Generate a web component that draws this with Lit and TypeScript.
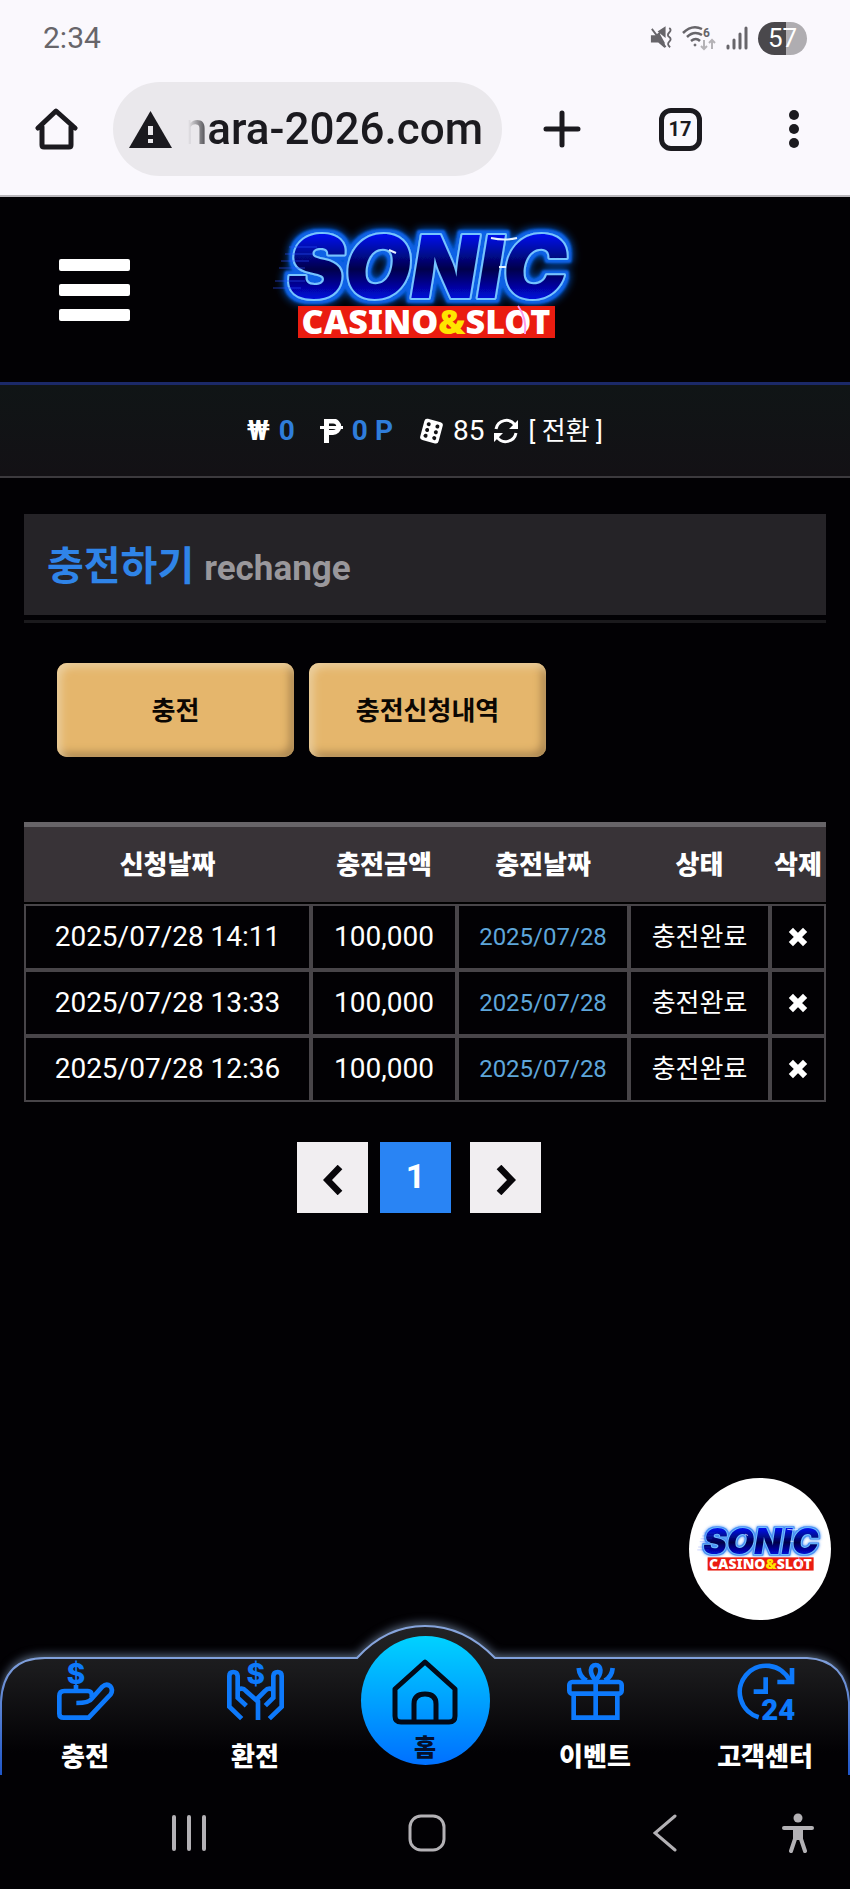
import { LitElement, html, css, svg } from "lit";
import { customElement, property } from "lit/decorators.js";

interface Deposit {
  requested: string;
  amount: string;
  credited: string;
  status: string;
}

const DEPOSITS: Deposit[] = [
  { requested: "2025/07/28 14:11", amount: "100,000", credited: "2025/07/28", status: "충전완료" },
  { requested: "2025/07/28 13:33", amount: "100,000", credited: "2025/07/28", status: "충전완료" },
  { requested: "2025/07/28 12:36", amount: "100,000", credited: "2025/07/28", status: "충전완료" },
];

const base = css`
  *,
  *::before,
  *::after {
    box-sizing: border-box;
  }
  :host {
    font-family: Roboto, "Noto Sans CJK KR", sans-serif;
  }
  button {
    display: flex;
    align-items: center;
    justify-content: center;
    margin: 0;
    padding: 0;
    border: 0;
    background: none;
    color: inherit;
    font: inherit;
    cursor: pointer;
  }
  a {
    color: inherit;
    text-decoration: none;
  }
  svg {
    display: block;
    flex: none;
  }
`;

@customElement("brand-logo")
class BrandLogo extends LitElement {
  @property({ type: Boolean, reflect: true }) light = false;

  static styles = [
    base,
    css`
      :host {
        display: block;
      }
      svg {
        width: 100%;
        height: auto;
        overflow: visible;
      }
      .word {
        font: italic 900 86px Inter, sans-serif;
        paint-order: stroke;
        stroke: #74c4ff;
        stroke-width: 4;
        stroke-linejoin: round;
      }
      .tag {
        font: 900 34px "Noto Sans", sans-serif;
        fill: #fff;
      }
      .amp {
        fill: #ffe600;
      }
      .aura {
        flood-color: #0c62e6;
      }
      :host([light]) .aura {
        flood-color: #4a90f4;
      }
    `,
  ];

  render() {
    return html`
      <svg viewBox="0 8 320 120" role="img" aria-label="SONIC CASINO&SLOT">
        <defs>
          <linearGradient id="fill" x1="0" y1="0" x2="0" y2="1">
            <stop offset="0.2" stop-color="#0010e8" />
            <stop offset="0.52" stop-color="#00024a" />
            <stop offset="0.8" stop-color="#0008d8" />
          </linearGradient>
          <filter id="glow" x="-10%" y="-20%" width="120%" height="140%">
            <feMorphology in="SourceAlpha" operator="dilate" radius="3" />
            <feGaussianBlur stdDeviation="1" result="wide" />
            <feFlood class="aura" />
            <feComposite in2="wide" operator="in" result="ring" />
            <feGaussianBlur in="ring" stdDeviation="4" result="soft" />
            <feMerge>
              <feMergeNode in="soft" />
              <feMergeNode in="ring" />
              <feMergeNode in="SourceGraphic" />
            </feMerge>
          </filter>
        </defs>
        <text class="word" x="162" y="76" text-anchor="middle" fill="url(#fill)" filter="url(#glow)">SONIC</text>
        <path d="M24 25H52M20 32H48M16 39H44M14 46H40M10 59H40M8 66H36" stroke="#2b50ff" stroke-width="1" opacity=".6" />
        <path d="M124 28l7 3M234 45h7M226 16q14 3 26 0" stroke="#e6f2ff" stroke-width="2" fill="none" />
        <rect x="33" y="84" width="257" height="32" fill="#ea1c10" />
        <text class="tag" x="161" y="112" text-anchor="middle">CASINO<tspan class="amp">&amp;</tspan>SLOT</text>
        <path d="M253 84q9 12 7 28" stroke="#ff9bea" stroke-width="2" fill="none" />
      </svg>
    `;
  }
}

@customElement("phone-chrome")
class PhoneChrome extends LitElement {
  static styles = [
    base,
    css`
      :host {
        display: block;
        background: #faf8fd;
        color: #1b1a1f;
        border-bottom: 2px solid #b9b7bc;
      }
      .status {
        display: flex;
        align-items: center;
        height: 76px;
        padding: 0 43px;
        color: #67656a;
      }
      .time {
        flex: 1;
        font-size: 30px;
        line-height: 36px;
      }
      .signals {
        display: flex;
        align-items: center;
        gap: 10px;
      }
      .six {
        font: 700 12px Roboto, sans-serif;
      }
      .battery {
        width: 49px;
        height: 33px;
        border-radius: 17px;
        background: linear-gradient(90deg, #4a484c 57%, #afadb1 57%);
        color: #fff;
        font-size: 26px;
        line-height: 33px;
        text-align: center;
      }
      .bar {
        display: grid;
        grid-template-columns: 113px minmax(0, 1fr) 120px 116px 112px;
        align-items: center;
        height: 119px;
        padding-bottom: 13px;
      }
      .bar button {
        height: 94px;
      }
      .pill {
        display: flex;
        align-items: center;
        gap: 8px;
        height: 94px;
        padding: 0 19px 0 16px;
        border-radius: 47px;
        background: #eae8ec;
      }
      .url {
        flex: 1;
        min-width: 0;
        height: 60px;
        padding: 0;
        border: 0;
        outline: 0;
        background: none;
        color: inherit;
        font: 500 44px Roboto, sans-serif;
        text-align: right;
        mask-image: linear-gradient(90deg, transparent 8px, #000 32px);
      }
      .tabs {
        width: 43px;
        height: 43px;
        border: 5px solid #1b1a1f;
        border-radius: 12px;
        font-size: 20px;
        font-weight: 700;
        line-height: 33px;
        text-align: center;
      }
    `,
  ];

  render() {
    return html`
      <div class="status">
        <span class="time">2:34</span>
        <div class="signals">
          <svg width="22" height="24" viewBox="0 0 24 24" fill="currentColor">
            <path d="M1 9h5l5-4v3l5 9v6l-7-6H1z" />
            <path d="M10 5l6-4v9zM2 2l15 20" stroke="currentColor" stroke-width="2" />
            <path d="M21 1q3 2 0 5t0 5 0 5 1 6" fill="none" stroke="currentColor" stroke-width="2" />
          </svg>
          <svg width="34" height="26" viewBox="0 0 34 26" fill="none" stroke="currentColor" stroke-width="2.5">
            <path d="M1 8Q10-1 20 4M5 12q7-7 15-2M9 16q5-4 9 0" />
            <circle cx="13" cy="20" r="1" fill="currentColor" stroke-width="1" />
            <text class="six" x="21" y="12" fill="currentColor" stroke="none">6</text>
            <path d="M22 15v9m-3-3l3 3 3-3M30 24v-9m-3 3l3-3 3 3" stroke="#b5b3b7" stroke-width="2" />
          </svg>
          <svg width="22" height="24" viewBox="0 0 22 24" stroke="currentColor" stroke-width="3" stroke-linecap="round">
            <path d="M2 20v2M8 14v8M14 8v14M20 2v20" />
          </svg>
          <span class="battery">57</span>
        </div>
      </div>
      <div class="bar">
        <button aria-label="Home">
          <svg width="43" height="44" viewBox="0 0 43 44" fill="none" stroke="currentColor" stroke-width="5" stroke-linecap="round" stroke-linejoin="round">
            <path d="M3 21L21 4l19 17M7 20v18q0 2 2 2h25q2 0 2-2V20" />
          </svg>
        </button>
        <div class="pill">
          <svg width="43" height="37" viewBox="0 0 43 37">
            <path d="M21.500 0L43 37H0z" fill="#1b1a1f" />
            <path d="M19 15h5v9h-5zM19 28h5v4h-5z" fill="#eae8ec" />
          </svg>
          <input class="url" type="text" aria-label="Address" value="nara-2026.com" />
        </div>
        <button aria-label="New tab">
          <svg width="38" height="38" viewBox="0 0 38 38" stroke="currentColor" stroke-width="5" stroke-linecap="round">
            <path d="M19 3v32M3 19h32" />
          </svg>
        </button>
        <button aria-label="Tabs"><span class="tabs">17</span></button>
        <button aria-label="More">
          <svg width="10" height="38" viewBox="0 0 10 38" fill="currentColor">
            <circle cx="5" cy="5" r="5" /><circle cx="5" cy="19" r="5" /><circle cx="5" cy="33" r="5" />
          </svg>
        </button>
      </div>
    `;
  }
}

@customElement("site-header")
class SiteHeader extends LitElement {
  static styles = [
    base,
    css`
      :host {
        display: block;
        color: #fff;
      }
      .top {
        display: grid;
        grid-template-columns: 1fr 320px 1fr;
        align-items: center;
        height: 188px;
        padding: 0 59px;
        border-bottom: 3px solid #1b2968;
      }
      .menu {
        flex-direction: column;
        gap: 13px;
        width: 71px;
      }
      .menu i {
        width: 71px;
        height: 12px;
        border-radius: 2px;
        background: #fff;
      }
      .funds {
        display: flex;
        align-items: center;
        justify-content: center;
        height: 93px;
        border-bottom: 2px solid #3c3a3e;
        background: linear-gradient(#101516, #131115);
        font-size: 28px;
        line-height: 36px;
      }
      .group {
        display: flex;
        align-items: center;
        gap: 9px;
        margin-right: 25px;
      }
      .group:last-child {
        margin-right: 0;
      }
      .sum {
        color: #2f7ddb;
      }
      .swap {
        font-size: 26px;
      }
    `,
  ];

  render() {
    return html`
      <div class="top">
        <button class="menu" aria-label="메뉴"><i></i><i></i><i></i></button>
        <brand-logo></brand-logo>
      </div>
      <div class="funds">
        <div class="group"><b>₩</b><b class="sum">0</b></div>
        <div class="group">
          <svg width="23" height="24" viewBox="0 0 23 24" fill="none" stroke="#fff">
            <path d="M6.500 24V2H13a5.500 5.500 0 0 1 0 11.500H6" stroke-width="5" />
            <path d="M0 8.500h23" stroke-width="3" />
          </svg>
          <b class="sum">0 P</b>
        </div>
        <div class="group">
          <svg width="26" height="26" viewBox="0 0 26 26">
            <g transform="rotate(15 13 13)">
              <rect x="4" y="2" width="19" height="22" rx="3" fill="#fff" />
              <g fill="#121214">
                <circle cx="9" cy="7" r="2" /><circle cx="18" cy="7" r="2" />
                <circle cx="9" cy="13" r="2" /><circle cx="18" cy="13" r="2" />
                <circle cx="9" cy="19" r="2" /><circle cx="18" cy="19" r="2" />
              </g>
            </g>
          </svg>
          <span>85</span>
          <svg width="26" height="26" viewBox="0 0 26 26" fill="none" stroke="#fff" stroke-width="3">
            <path d="M3 11A10.500 10.500 0 0 1 22 7M23 15A10.500 10.500 0 0 1 4 19" />
            <path d="M25 2v9h-9zM1 24v-9h9z" fill="#fff" stroke="none" />
          </svg>
          <button class="swap">[ 전환 ]</button>
        </div>
      </div>
    `;
  }
}

@customElement("deposit-history")
class DepositHistory extends LitElement {
  @property({ attribute: false }) rows: Deposit[] = [];

  static styles = [
    base,
    css`
      :host {
        display: block;
        padding: 36px 24px 41px;
        color: #fff;
      }
      .title {
        display: flex;
        align-items: baseline;
        gap: 10px;
        height: 101px;
        margin: 0;
        padding: 29px 23px 0;
        background: #252327;
        color: #2f84e8;
        font-size: 40px;
        font-weight: 700;
        line-height: 48px;
      }
      .title small {
        color: #99979b;
        font-size: 35px;
      }
      .rule {
        height: 8px;
        border-bottom: 3px solid #1b1a1d;
      }
      .actions {
        display: flex;
        gap: 15px;
        padding: 40px 33px 65px;
      }
      .actions button {
        width: 237px;
        height: 94px;
        padding-bottom: 3px;
        border-radius: 10px;
        background: #e5b66c;
        box-shadow: inset 4px 4px 8px #ecd0a0, inset -4px -4px 8px #a5814c;
        color: #0b0703;
        font-size: 26px;
        font-weight: 700;
      }
      table {
        width: 100%;
        border-collapse: separate;
        border-spacing: 0;
        table-layout: fixed;
      }
      .amount {
        width: 146px;
      }
      .date {
        width: 172px;
      }
      .state {
        width: 141px;
      }
      .drop {
        width: 56px;
      }
      th {
        height: 82px;
        padding: 0;
        border-top: 5px solid #676468;
        border-bottom: 2px solid #000;
        background: #383337;
        font-size: 26px;
        font-weight: 900;
        line-height: 36px;
        white-space: nowrap;
      }
      td {
        height: 66px;
        padding: 0;
        border: 2px solid #484549;
        font-size: 28px;
        line-height: 36px;
        text-align: center;
        white-space: nowrap;
      }
      td.credited {
        color: #5ea6da;
        font-size: 24px;
      }
      td.status {
        font-size: 26px;
      }
      td button {
        width: 100%;
        height: 60px;
      }
      .pages {
        display: flex;
        justify-content: center;
        gap: 12px;
        padding-top: 40px;
        margin-right: 12px;
      }
      .pages button {
        width: 71px;
        height: 71px;
        padding-top: 4px;
        background: #f1eef1;
        color: #08060a;
        font-size: 34px;
        font-weight: 700;
        line-height: 40px;
      }
      .pages .current {
        margin-right: 7px;
        padding: 0 0 3px;
        background: #2984f4;
        color: #fff;
      }
    `,
  ];

  render() {
    return html`
      <h1 class="title">충전하기<small>rechange</small></h1>
      <div class="rule"></div>
      <div class="actions">
        <button>충전</button>
        <button>충전신청내역</button>
      </div>
      <table>
        <colgroup>
          <col /><col class="amount" /><col class="date" /><col class="state" /><col class="drop" />
        </colgroup>
        <thead>
          <tr><th>신청날짜</th><th>충전금액</th><th>충전날짜</th><th>상태</th><th>삭제</th></tr>
        </thead>
        <tbody>
          ${this.rows.map(
            (row) => html`
              <tr>
                <td>${row.requested}</td>
                <td>${row.amount}</td>
                <td class="credited">${row.credited}</td>
                <td class="status">${row.status}</td>
                <td>
                  <button aria-label="삭제">
                    <svg width="20" height="20" viewBox="0 0 20 20" stroke="#fff" stroke-width="6" stroke-linecap="square">
                      <path d="M5 5l10 10M15 5L5 15" />
                    </svg>
                  </button>
                </td>
              </tr>
            `
          )}
        </tbody>
      </table>
      <div class="pages">
        <button aria-label="이전">
          <svg width="20" height="30" viewBox="0 0 20 30" fill="none" stroke="currentColor" stroke-width="6.500">
            <path d="M17 2L4.500 15 17 28" />
          </svg>
        </button>
        <button class="current">1</button>
        <button aria-label="다음">
          <svg width="20" height="30" viewBox="0 0 20 30" fill="none" stroke="currentColor" stroke-width="6.500">
            <path d="M3 2l12.500 13L3 28" />
          </svg>
        </button>
      </div>
    `;
  }
}

const dollar = (x: number, y: number) => svg`<text class="mark" x=${x} y=${y} text-anchor="middle">$</text>`;

const depositIcon = html`
  <svg class="icon" viewBox="0 0 171 171">
    ${dollar(57, 64)}
    <path d="M57 66v14" />
    <path d="M104 104q3-20-12-20H22Q7 84 7 99v53q0 12 13 12h75l66-70q8-13-1-24-11-10-24 1l-32 36q-8 13-46 13" />
  </svg>
`;

const withdrawIcon = html`
  <svg class="icon" viewBox="0 0 171 171">
    ${dollar(86, 64)}
    <path d="M44 167L7 131V39q0-12 12-12t13 12v65l26 24M33 80q14-8 24 4l36 32v55" />
    <path d="M127 167l37-36V39q0-12-12-12t-13 12v65l-24 24M138 80q-14-8-24 4L90 108" />
  </svg>
`;

const eventIcon = html`
  <svg class="icon" viewBox="0 0 171 171">
    <rect x="7" y="57" width="157" height="35" rx="9" />
    <path d="M20 92v72h131V92M86 57v107M86 52C66 32 68 6 86 6s20 26 0 46M35 15q2 26 24 38M137 15q-2 26-24 38" />
  </svg>
`;

const supportIcon = html`
  <svg class="icon" viewBox="0 0 171 171">
    <path d="M65 163A79 79 0 1 1 158 52M86 43v43H50M165 15v42h-44" />
    <text class="mark digits" x="124" y="171" text-anchor="middle">24</text>
  </svg>
`;

@customElement("bottom-nav")
class BottomNav extends LitElement {
  static styles = [
    base,
    css`
      :host {
        display: block;
        position: relative;
        color: #fff;
      }
      .shape {
        position: absolute;
        left: 0;
        top: -36px;
        width: 100%;
        height: 154px;
        overflow: visible;
        clip-path: inset(-24px 0 0 0);
      }
      .outline {
        filter: drop-shadow(0 -3px 5px #56667c);
      }
      nav {
        position: relative;
        display: grid;
        grid-template-columns: repeat(5, 1fr);
        height: 118px;
      }
      .item {
        display: flex;
        flex-direction: column;
        align-items: center;
        gap: 18px;
        padding-top: 6px;
        font-size: 26px;
        font-weight: 900;
        line-height: 38px;
        white-space: nowrap;
      }
      .icon {
        width: 57px;
        height: 57px;
        fill: none;
        stroke: #0d79fb;
        stroke-width: 14;
        overflow: visible;
      }
      .mark {
        font: 800 84px Inter, sans-serif;
        fill: #0d79fb;
        stroke: none;
      }
      .digits {
        font: 900 88px Roboto, sans-serif;
      }
      .home {
        display: flex;
        flex-direction: column;
        align-items: center;
        justify-self: center;
        gap: 7px;
        width: 129px;
        height: 129px;
        margin-top: -21px;
        padding-top: 23px;
        border-radius: 50%;
        background: linear-gradient(#00d2ff, #0070ff);
        color: #04102c;
        font-size: 24px;
        font-weight: 900;
        line-height: 32px;
      }
      .float {
        position: absolute;
        right: 19px;
        bottom: 155px;
        display: flex;
        align-items: center;
        justify-content: center;
        width: 142px;
        height: 142px;
        padding-top: 4px;
        border-radius: 50%;
        background: #fff;
      }
      .float brand-logo {
        width: 132px;
      }
    `,
  ];

  render() {
    return html`
      <svg class="shape" viewBox="0 0 850 154" preserveAspectRatio="none">
        <defs>
          <linearGradient id="panel" x1="0" y1="0" x2="0" y2="1">
            <stop offset="0" stop-color="#222326" />
            <stop offset="0.3" stop-color="#1a1a1c" />
            <stop offset="0.85" stop-color="#020104" />
          </linearGradient>
          <linearGradient id="line" gradientUnits="userSpaceOnUse" x1="0" y1="0" x2="0" y2="154">
            <stop offset="0.2" stop-color="#86a4dc" />
            <stop offset="1" stop-color="#1f56c8" />
          </linearGradient>
        </defs>
        <path class="outline" d="M1 154V81Q3 37 45 37H357Q386 5 425 5T495 37H807Q846 39 849 81V154" fill="#000" />
        <path d="M1 154V81Q3 37 45 37H357Q386 5 425 5T495 37H807Q846 39 849 81V154" fill="url(#panel)" stroke="url(#line)" stroke-width="2" />
      </svg>
      <nav>
        <a class="item" href="#deposit">${depositIcon}<span>충전</span></a>
        <a class="item" href="#withdraw">${withdrawIcon}<span>환전</span></a>
        <a class="home" href="#home">
          <svg width="66" height="66" viewBox="0 0 66 66" fill="none" stroke="#020a18" stroke-width="5" stroke-linejoin="round">
            <path d="M33 3L63 30V57q0 6-6 6H9q-6 0-6-6V30zM22 63V45q0-10 11-10t11 10v18" />
          </svg>
          <span>홈</span>
        </a>
        <a class="item" href="#event">${eventIcon}<span>이벤트</span></a>
        <a class="item" href="#support">${supportIcon}<span>고객센터</span></a>
      </nav>
      <a class="float" href="#top"><brand-logo light></brand-logo></a>
    `;
  }
}

@customElement("system-keys")
class SystemKeys extends LitElement {
  static styles = [
    base,
    css`
      :host {
        display: grid;
        box-sizing: border-box;
        grid-template-columns: 1fr 1fr 1fr 28px;
        height: 114px;
        padding: 2px 38px 0 70px;
        color: #b3b1b5;
      }
    `,
  ];

  render() {
    return html`
      <button aria-label="Recents">
        <svg width="34" height="36" viewBox="0 0 34 36" stroke="currentColor" stroke-width="4" stroke-linecap="round">
          <path d="M2 2v32M17 2v32M32 2v32" />
        </svg>
      </button>
      <button aria-label="Home">
        <svg width="38" height="38" viewBox="0 0 38 38" fill="none" stroke="currentColor" stroke-width="3">
          <rect x="2" y="2" width="34" height="34" rx="11" />
        </svg>
      </button>
      <button aria-label="Back">
        <svg width="24" height="38" viewBox="0 0 24 38" fill="none" stroke="currentColor" stroke-width="3" stroke-linecap="round">
          <path d="M22 2L2 19l20 17" />
        </svg>
      </button>
      <button aria-label="Accessibility">
        <svg width="34" height="40" viewBox="0 0 34 40" fill="currentColor" stroke="currentColor" stroke-linecap="round" stroke-linejoin="round">
          <circle cx="17" cy="5" r="4.500" stroke="none" />
          <path d="M3 15h28" stroke-width="4" />
          <path d="M13 15h8v11H13z" stroke-width="2" />
          <path d="M14 26l-4 12M20 26l4 12" stroke-width="4" />
        </svg>
      </button>
    `;
  }
}

@customElement("app-root")
class AppRoot extends LitElement {
  static styles = css`
    :host {
      display: flex;
      flex-direction: column;
      min-height: 100vh;
      background: #020104;
    }
    main {
      flex: 1;
    }
  `;

  render() {
    return html`
      <phone-chrome></phone-chrome>
      <site-header></site-header>
      <main><deposit-history .rows=${DEPOSITS}></deposit-history></main>
      <bottom-nav></bottom-nav>
      <system-keys></system-keys>
    `;
  }
}
